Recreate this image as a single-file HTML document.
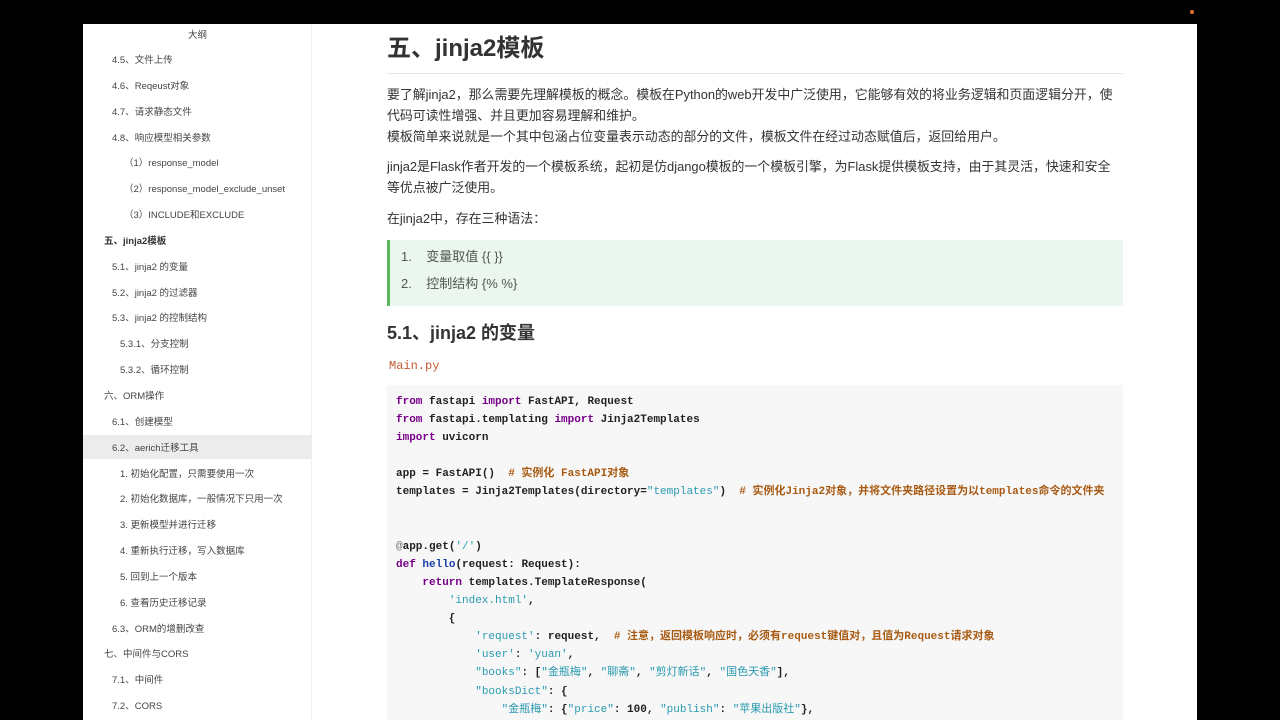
<!DOCTYPE html>
<html><head><meta charset="utf-8"><style>
body{margin:0;width:1280px;height:720px;background:#000;overflow:hidden;font-family:"Liberation Sans","Noto Sans CJK SC",sans-serif;}
*{box-sizing:border-box}
.page{position:absolute;left:83px;top:24px;width:1114px;height:696px;background:#fff;overflow:hidden;}
.side{position:absolute;left:0;top:0;width:229px;height:696px;background:#fff;border-right:1px solid #f0f0f0;}
.si{position:absolute;left:0;width:229px;height:24px;line-height:24px;font-size:9.5px;color:#444;white-space:nowrap;}
.si.b{font-weight:bold;color:#333}
.si.hl{background:#ececec}
.main{position:absolute;left:304px;top:0;width:736px;color:#333;}
.t{position:absolute;white-space:nowrap;font-size:12.9px;line-height:21px;}
h1{position:absolute;margin:0;left:0;top:10px;font-size:24px;line-height:30px;font-weight:bold;color:#333}
.rule{position:absolute;left:0;top:49px;width:736px;height:1px;background:#e6e6e6}
.bq{position:absolute;left:0;top:216px;width:736px;height:66px;background:#eaf6ee;border-left:3px solid #5cb85c;}
.code{position:absolute;left:0;top:361px;width:736px;height:340px;background:#f7f7f7;}
pre{position:absolute;left:9px;top:8px;margin:0;font-family:"Liberation Mono","Noto Sans CJK SC",monospace;font-size:11px;line-height:18.1px;font-weight:bold;color:#222;}
.k{color:#708}.s{color:#2a9ab0;font-weight:normal}.c{color:#a85a12}.f{color:#1a3fa8}.m{color:#777;font-weight:normal}
</style></head><body>
<div class="page">
<div class="side">
<div class="si" style="top:0px;text-align:center">大纲</div>
<div class="si" style="top:25px;padding-left:29px">4.5、文件上传</div>
<div class="si" style="top:51px;padding-left:29px">4.6、Reqeust对象</div>
<div class="si" style="top:77px;padding-left:29px">4.7、请求静态文件</div>
<div class="si" style="top:103px;padding-left:29px">4.8、响应模型相关参数</div>
<div class="si" style="top:128px;padding-left:41px">（1）response_model</div>
<div class="si" style="top:154px;padding-left:41px">（2）response_model_exclude_unset</div>
<div class="si" style="top:180px;padding-left:41px">（3）INCLUDE和EXCLUDE</div>
<div class="si b" style="top:206px;padding-left:21px">五、jinja2模板</div>
<div class="si" style="top:232px;padding-left:29px">5.1、jinja2 的变量</div>
<div class="si" style="top:258px;padding-left:29px">5.2、jinja2 的过滤器</div>
<div class="si" style="top:283px;padding-left:29px">5.3、jinja2 的控制结构</div>
<div class="si" style="top:309px;padding-left:37px">5.3.1、分支控制</div>
<div class="si" style="top:335px;padding-left:37px">5.3.2、循环控制</div>
<div class="si" style="top:361px;padding-left:21px">六、ORM操作</div>
<div class="si" style="top:387px;padding-left:29px">6.1、创建模型</div>
<div class="si hl" style="top:411px;height:24px;line-height:28px;padding-left:29px">6.2、aerich迁移工具</div>
<div class="si" style="top:439px;padding-left:37px">1. 初始化配置，只需要使用一次</div>
<div class="si" style="top:464px;padding-left:37px">2. 初始化数据库，一般情况下只用一次</div>
<div class="si" style="top:490px;padding-left:37px">3. 更新模型并进行迁移</div>
<div class="si" style="top:516px;padding-left:37px">4. 重新执行迁移，写入数据库</div>
<div class="si" style="top:542px;padding-left:37px">5. 回到上一个版本</div>
<div class="si" style="top:568px;padding-left:37px">6. 查看历史迁移记录</div>
<div class="si" style="top:594px;padding-left:29px">6.3、ORM的增删改查</div>
<div class="si" style="top:619px;padding-left:21px">七、中间件与CORS</div>
<div class="si" style="top:645px;padding-left:29px">7.1、中间件</div>
<div class="si" style="top:671px;padding-left:29px">7.2、CORS</div>
</div>
<div class="main">
<h1>五、jinja2模板</h1>
<div class="rule"></div>
<div class="t" style="top:60px">要了解jinja2，那么需要先理解模板的概念。模板在Python的web开发中广泛使用，它能够有效的将业务逻辑和页面逻辑分开，使</div>
<div class="t" style="top:81px">代码可读性增强、并且更加容易理解和维护。</div>
<div class="t" style="top:102px">模板简单来说就是一个其中包涵占位变量表示动态的部分的文件，模板文件在经过动态赋值后，返回给用户。</div>
<div class="t" style="top:132px">jinja2是Flask作者开发的一个模板系统，起初是仿django模板的一个模板引擎，为Flask提供模板支持，由于其灵活，快速和安全</div>
<div class="t" style="top:153px">等优点被广泛使用。</div>
<div class="t" style="top:184px">在jinja2中，存在三种语法：</div>
<div class="bq">
<div class="t" style="top:6px;left:11px;font-size:13px;color:#555">1.&nbsp;&nbsp;&nbsp;&nbsp;变量取值 {{ }}</div>
<div class="t" style="top:33px;left:11px;font-size:13px;color:#555">2.&nbsp;&nbsp;&nbsp;&nbsp;控制结构 {% %}</div>
</div>
<div class="t" style="top:297px;font-size:18px;line-height:24px;font-weight:bold">5.1、jinja2 的变量</div>
<div class="t" style="top:333px;left:2px;font-family:'Liberation Mono',monospace;font-size:12px;line-height:18px;color:#c4592f">Main.py</div>
<div class="code"><pre><span class="k">from</span> fastapi <span class="k">import</span> FastAPI, Request
<span class="k">from</span> fastapi.templating <span class="k">import</span> Jinja2Templates
<span class="k">import</span> uvicorn

app = FastAPI()  <span class="c"># 实例化 FastAPI对象</span>
templates = Jinja2Templates(directory=<span class="s">"templates"</span>)  <span class="c"># 实例化Jinja2对象，并将文件夹路径设置为以templates命令的文件夹</span>


<span class="m">@</span>app.get(<span class="s">'/'</span>)
<span class="k">def</span> <span class="f">hello</span>(request: Request):
    <span class="k">return</span> templates.TemplateResponse(
        <span class="s">'index.html'</span>,
        {
            <span class="s">'request'</span>: request,  <span class="c"># 注意，返回模板响应时，必须有request键值对，且值为Request请求对象</span>
            <span class="s">'user'</span>: <span class="s">'yuan'</span>,
            <span class="s">"books"</span>: [<span class="s">"金瓶梅"</span>, <span class="s">"聊斋"</span>, <span class="s">"剪灯新话"</span>, <span class="s">"国色天香"</span>],
            <span class="s">"booksDict"</span>: {
                <span class="s">"金瓶梅"</span>: {<span class="s">"price"</span>: 100, <span class="s">"publish"</span>: <span class="s">"苹果出版社"</span>},
</pre></div>
</div>
</div>
<div style="position:absolute;left:1190px;top:10px;width:4px;height:4px;border-radius:2px;background:#e8702a"></div>
</body></html>
